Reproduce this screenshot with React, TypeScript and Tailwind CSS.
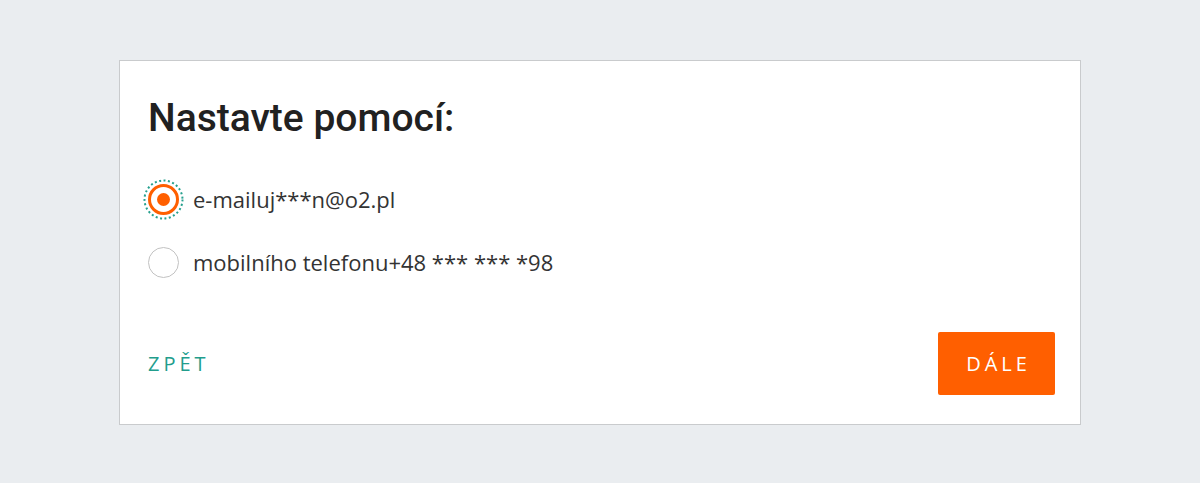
import { useState } from 'react';

const options = [
  { id: 'email', label: 'e-mail', value: 'uj***n@o2.pl' },
  { id: 'phone', label: 'mobilního telefonu', value: '+48 *** *** *98' },
];

function Radio({ checked }: { checked: boolean }) {
  return (
    <span className="relative flex h-[31px] w-[31px] shrink-0 items-center justify-center">
      {checked && (
        <svg
          className="absolute left-[-5px] top-[-5px]"
          width="41"
          height="41"
          viewBox="0 0 41 41"
        >
          <circle
            cx="20.5"
            cy="20.5"
            r="19"
            fill="none"
            stroke="#26a08e"
            strokeWidth="2"
            strokeDasharray="2 2.45"
          />
        </svg>
      )}
      <span
        className={
          checked
            ? 'flex h-[31px] w-[31px] items-center justify-center rounded-full border-[3px] border-[#ff5f00] bg-white'
            : 'h-[31px] w-[31px] rounded-full border-[1.5px] border-[#c2c2c2] bg-white'
        }
      >
        {checked && <span className="h-[13px] w-[13px] rounded-full bg-[#ff5f00]" />}
      </span>
    </span>
  );
}

export default function App() {
  const [selected, setSelected] = useState('email');

  return (
    <div className="min-h-[483px] bg-[#eaedf0] pt-[60px]">
      <div className="mx-auto flex h-[365px] w-[962px] flex-col border border-[#c9cbcd] bg-white px-[28px] pb-[29px] pr-[25px]">
        <h1
          className="mt-[31px] text-[39px] font-medium leading-[52px] text-[#212121]"
          style={{ fontFamily: 'Roboto, sans-serif' }}
        >
          Nastavte pomocí:
        </h1>

        <div
          className="mt-[40px] flex flex-col gap-[32px]"
          style={{ fontFamily: '"Open Sans", sans-serif' }}
        >
          {options.map((o) => (
            <label
              key={o.id}
              className="flex cursor-pointer items-center gap-[14px] text-[22px] leading-[31px] text-[#333]"
              onClick={() => setSelected(o.id)}
            >
              <Radio checked={selected === o.id} />
              <span>
                {o.label}
                {o.value}
              </span>
            </label>
          ))}
        </div>

        <div
          className="mt-auto flex items-center justify-between"
          style={{ fontFamily: '"Open Sans", sans-serif' }}
        >
          <button className="text-[20px] tracking-[4px] text-[#229d8c]">ZPĚT</button>
          <button className="h-[63px] w-[117px] rounded-[2px] bg-[#ff5f00] pl-[4px] text-[20px] tracking-[4px] text-white">
            DÁLE
          </button>
        </div>
      </div>
    </div>
  );
}
